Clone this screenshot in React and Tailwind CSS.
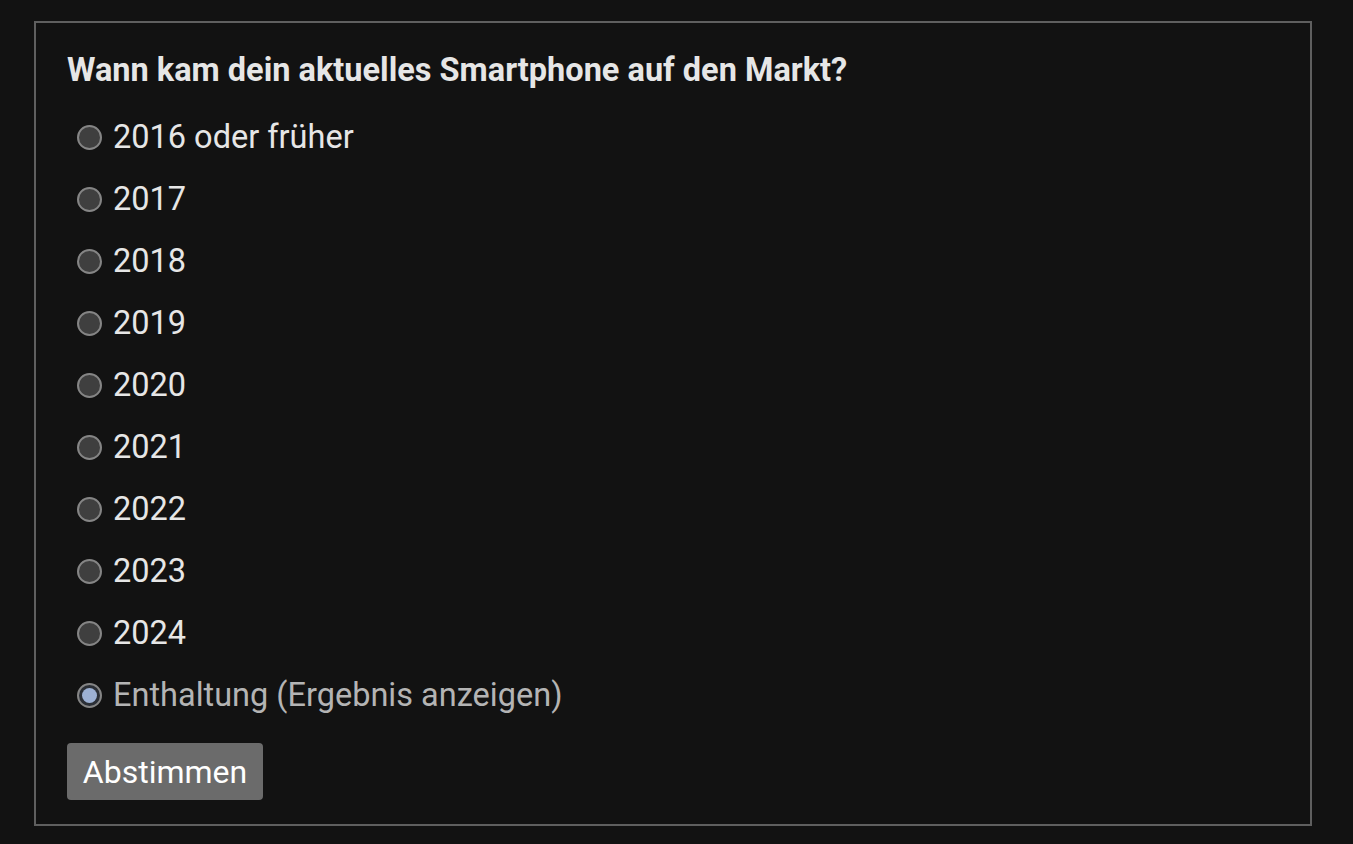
import React, { useState } from "react";

const options = [
  "2016 oder früher",
  "2017",
  "2018",
  "2019",
  "2020",
  "2021",
  "2022",
  "2023",
  "2024",
  "Enthaltung (Ergebnis anzeigen)",
];

function Radio({ checked }) {
  return (
    <span
      className={`w-[25px] h-[25px] rounded-full border-2 border-[#858585] flex items-center justify-center shrink-0 ${
        checked ? "bg-[#2b2f36]" : "bg-[#3f3f3f]"
      }`}
    >
      {checked && <span className="w-[15px] h-[15px] rounded-full bg-[#9db1d4]" />}
    </span>
  );
}

export default function App() {
  const [picked, setPicked] = useState(9);

  return (
    <div className="min-h-[844px] bg-[#121212] pt-[21px] pl-[34px] pr-[41px] font-['Roboto',sans-serif]">
      <div className="border-2 border-[#5f5f5f] h-[805px] pt-[17px] px-[31px]">
        <div className="h-[60px] flex items-center mb-[6px] text-[32.5px] font-bold text-[#e6e6e6]">
          Wann kam dein aktuelles Smartphone auf den Markt?
        </div>
        <div className="flex flex-col pl-[10px]">
          {options.map((o, i) => (
            <label key={o} onClick={() => setPicked(i)} className="h-[62px] flex items-center gap-[11px] cursor-pointer">
              <Radio checked={picked === i} />
              <span className={`text-[32.5px] ${picked === i ? "text-[#b4b4b4]" : "text-[#e6e6e6]"}`}>{o}</span>
            </label>
          ))}
        </div>
        <button className="mt-[17px] w-[196px] h-[57px] rounded-[4px] bg-[#6b6b6b] text-white text-[32px] flex items-center justify-center">
          Abstimmen
        </button>
      </div>
    </div>
  );
}
